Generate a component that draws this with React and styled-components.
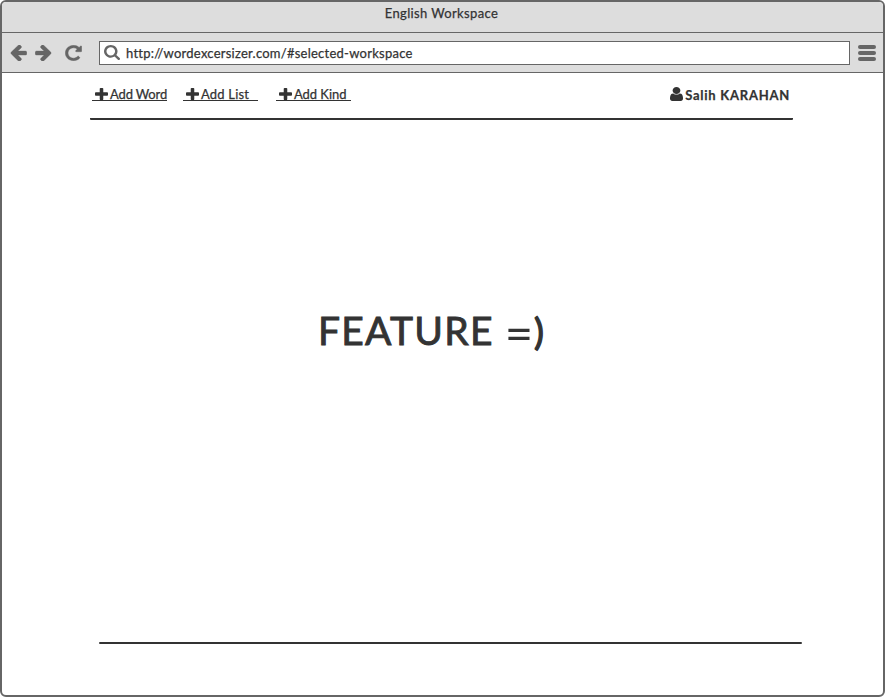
import React from "react";
import styled, { createGlobalStyle } from "styled-components";

const Global = createGlobalStyle`
  * { box-sizing: border-box; }
  body { margin: 0; background: #fff; overflow: hidden; }
`;

const Browser = styled.div`
  width: 885px;
  height: 697px;
  display: flex;
  flex-direction: column;
  background: #fff;
  border: 2px solid #666;
  border-radius: 6px;
  overflow: hidden;
  color: #333;
  font-family: Lato, "Open Sans", sans-serif;
  font-size: 13px;
`;

const TitleBar = styled.header`
  height: 31px;
  flex: none;
  display: flex;
  justify-content: center;
  padding: 3px 2px 0 0;
  background: #ddd;
  border-bottom: 1px solid #666;
  line-height: 17px;
`;

const Toolbar = styled.nav`
  height: 40px;
  flex: none;
  display: flex;
  align-items: center;
  padding: 0 7px 0 8px;
  background: #ddd;
  border-bottom: 1px solid #666;
`;

const Glyph = styled.svg`
  display: block;
  flex: none;
  width: ${(p) => p.$w}px;
  height: ${(p) => p.$h}px;
  margin-right: ${(p) => p.$gap || 0}px;
  fill: ${(p) => p.$color || "#666"};
`;

const AddressBar = styled.div`
  width: 751px;
  height: 24px;
  flex: none;
  display: flex;
  align-items: center;
  padding: 0 4px;
  margin: 0 8px 0 0;
  background: #fff;
  border: 1px solid #666;
`;

const Label = styled.span`
  display: block;
  white-space: pre;
  line-height: 16px;
  font-weight: ${(p) => p.$weight || 400};
  letter-spacing: ${(p) => p.$track || 0}px;
  -webkit-text-stroke: ${(p) => p.$stroke ?? 0.25}px currentColor;
`;

const MenuButton = styled.div`
  width: 18px;
  height: 16px;
  display: grid;
  grid-auto-rows: 4px;
  gap: 2px;
`;

const MenuBar = styled.i`
  border-radius: 2px;
  background: #666;
`;

const Page = styled.main`
  flex: 1;
  display: flex;
  flex-direction: column;
`;

const Header = styled.div`
  width: 703px;
  height: 47px;
  margin-left: 88px;
  display: flex;
  justify-content: space-between;
  align-items: flex-start;
  padding: 13px 3px 0 2px;
  border-bottom: 2px solid #333;
  border-radius: 1px;
`;

const Actions = styled.div`
  display: grid;
  grid-template-columns: 75px 75px 75px;
  column-gap: 17px;
`;

const Action = styled.a`
  height: 15px;
  display: flex;
  align-items: center;
  padding: 2px 0 0 3px;
  margin-left: ${(p) => p.$shift || 0}px;
  margin-right: ${(p) => -(p.$shift || 0)}px;
  border-bottom: 1px solid #333;
`;

const User = styled.div`
  height: 16px;
  display: flex;
  align-items: center;
`;

const UserName = styled(Label)`
  padding-top: 1px;
`;

const Feature = styled.h1`
  flex: 1;
  display: flex;
  align-items: flex-start;
  margin: 0;
  padding: 186px 0 0 316px;
  font-size: 39px;
  font-weight: 400;
  line-height: 48px;
  letter-spacing: 1.25px;
  -webkit-text-stroke: 0.9px currentColor;
  stroke-linejoin: round;
`;

const Equals = styled.span`
  margin-left: 11px;
  padding-top: 2px;
  font-size: 49px;
  letter-spacing: 0;
  -webkit-text-stroke-width: 0;
`;

const Paren = styled.span`
  margin-left: 1px;
  padding-top: 1px;
  font-size: 37px;
  -webkit-text-stroke-width: 1.3px;
`;

const FooterRule = styled.hr`
  width: 703px;
  height: 2px;
  margin: 0 0 51px 97px;
  border: 0;
  border-radius: 1px;
  background: #333;
`;

const paths = {
  left: "M1664 896v128q0 53-32.5 90.5t-84.5 37.5h-704l293 294q38 36 38 90t-38 90l-75 76q-37 37-90 37-52 0-91-37l-651-652q-37-37-37-90 0-52 37-91l651-650q38-38 91-38 52 0 90 38l75 74q38 38 38 91t-38 91l-293 293h704q52 0 84.5 37.5t32.5 90.5z",
  reload: "M1664 256v448q0 26-19 45t-45 19h-448q-42 0-59-40-17-39 14-69l138-138q-148-137-349-137-104 0-198.5 40.5t-163.5 109.5-109.5 163.5-40.5 198.5 40.5 198.5 109.5 163.5 163.5 109.5 198.5 40.5q119 0 225-52t179-147q7-10 23-12 15 0 25 9l137 138q9 8 9.5 20.5t-7.5 22.5q-109 132-264 204.5t-327 72.5q-156 0-298-61t-245-164-164-245-61-298 61-298 164-245 245-164 298-61q147 0 284.5 55.5t244.5 156.5l130-129q29-31 70-14 39 17 39 59z",
  search: "M1216 832q0-185-131.5-316.5t-316.5-131.5-316.5 131.5-131.5 316.5 131.5 316.5 316.5 131.5 316.5-131.5 131.5-316.5zm512 832q0 52-38 90t-90 38q-54 0-90-38l-343-342q-179 124-399 124-143 0-273.5-55.5t-225-150-150-225-55.5-273.5 55.5-273.5 150-225 225-150 273.5-55.5 273.5 55.5 225 150 150 225 55.5 273.5q0 220-124 399l343 343q37 37 37 90z",
  plus: "M1600 736v192q0 40-28 68t-68 28h-416v416q0 40-28 68t-68 28h-192q-40 0-68-28t-28-68v-416h-416q-40 0-68-28t-28-68v-192q0-40 28-68t68-28h416v-416q0-40 28-68t68-28h192q40 0 68 28t28 68v416h416q40 0 68 28t28 68z",
  user: "M1536 1399q0 109-62.5 187t-150.5 78h-854q-88 0-150.5-78t-62.5-187q0-85 8.5-160.5t31.5-152 58.5-131 94-89 134.5-34.5q131 128 313 128t313-128q76 0 134.5 34.5t94 89 58.5 131 31.5 152 8.5 160.5zm-256-887q0 159-112.5 271.5t-271.5 112.5-271.5-112.5-112.5-271.5 112.5-271.5 271.5-112.5 271.5 112.5 112.5 271.5z",
};

function Icon({ name, box, w, h, gap, color, heavy, flip }) {
  return (
    <Glyph $w={w} $h={h} $gap={gap} $color={color} viewBox={box} preserveAspectRatio="none">
      <path
        d={paths[name]}
        stroke={heavy ? "#666" : "none"}
        strokeWidth={heavy || 0}
        transform={flip ? "translate(1792 0) scale(-1 1)" : undefined}
      />
    </Glyph>
  );
}

const actions = [
  { text: "Add Word", shift: 0, track: -0.15 },
  { text: "Add List", shift: -1, track: 0.2 },
  { text: "Add Kind", shift: 0, track: -0.05 },
];

export default function App() {
  return (
    <>
      <Global />
      <Browser>
        <TitleBar>
          <Label $track={0.36}>English Workspace</Label>
        </TitleBar>
        <Toolbar>
          <Icon name="left" box="110 200 1572 1510" w={17} h={16} gap={8} heavy={30} />
          <Icon name="left" box="110 200 1572 1510" w={17} h={16} gap={13} heavy={30} flip />
          <Icon name="reload" box="100 100 1592 1592" w={17} h={16} gap={17} heavy={40} />
          <AddressBar>
            <Icon name="search" box="64 128 1664 1664" w={16} h={15} gap={6} />
            <Label $track={0.25}>http://wordexcersizer.com/#selected-workspace</Label>
          </AddressBar>
          <MenuButton>
            <MenuBar />
            <MenuBar />
            <MenuBar />
          </MenuButton>
        </Toolbar>
        <Page>
          <Header>
            <Actions>
              {actions.map((a) => (
                <Action key={a.text} $shift={a.shift}>
                  <Icon name="plus" box="192 128 1408 1408" w={13} h={12} gap={2} color="#333" />
                  <Label $track={a.track}>{a.text}</Label>
                </Action>
              ))}
            </Actions>
            <User>
              <Icon name="user" box="256 128 1280 1536" w={13} h={14} gap={2} color="#333" />
              <UserName $weight={700} $track={0.75}>Salih KARAHAN</UserName>
            </User>
          </Header>
          <Feature>
            <span>FEATURE</span>
            <Equals>=</Equals>
            <Paren>)</Paren>
          </Feature>
          <FooterRule />
        </Page>
      </Browser>
    </>
  );
}
